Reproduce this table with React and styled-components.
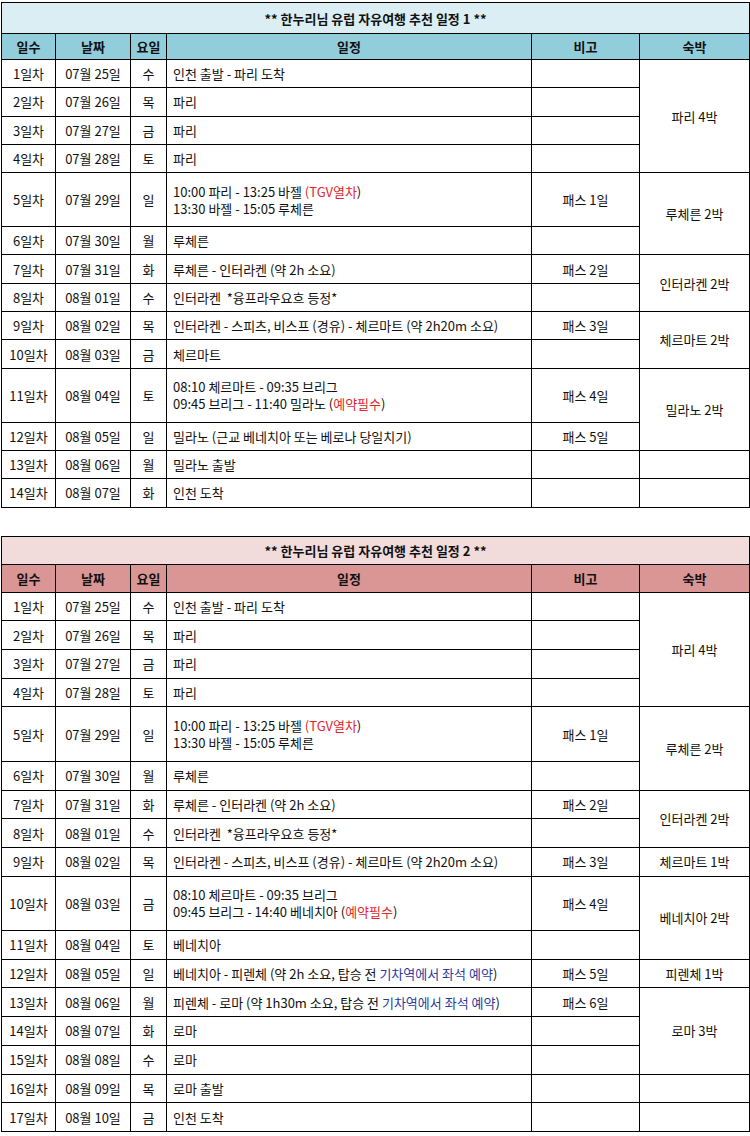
import React from "react";
import styled, { createGlobalStyle } from "styled-components";

const Global = createGlobalStyle`
  html, body { margin: 0; padding: 0; background: #fff; }
  body { font-family: "Noto Sans CJK KR", "Noto Sans", sans-serif; color: #111; }
`;

const Page = styled.div`
  display: flex;
  flex-direction: column;
  gap: 28px;
  padding: 2px 2px 0 1px;
`;

const Table = styled.table`
  width: 748px;
  border-collapse: collapse;
  table-layout: fixed;
  font-size: 13px;
  border: 1px solid #000;
`;

const TitleCell = styled.th`
  height: ${(p) => p.$h}px;
  padding: 0;
  background: ${(p) => p.$bg};
  border: 1px solid #000;
  font-weight: 700;
  text-align: center;
  vertical-align: middle;
`;

const HeadCell = styled.th`
  height: ${(p) => p.$h}px;
  padding: 0;
  background: ${(p) => p.$bg};
  border: 1px solid #000;
  font-weight: 700;
  text-align: center;
  vertical-align: middle;
`;

const Cell = styled.td`
  height: ${(p) => p.$h}px;
  padding: ${(p) => (p.$left ? "0 6px" : "0")};
  border: 1px solid #000;
  text-align: ${(p) => (p.$left ? "left" : "center")};
  vertical-align: middle;
  line-height: 17px;
  white-space: pre;
`;

const Red = styled.span`
  color: #e3262b;
`;

const Blue = styled.span`
  color: #2a3a9c;
`;

const COLS = [54, 75, 36, 365, 108, 110];
const HEADS = ["일수", "날짜", "요일", "일정", "비고", "숙박"];

const plan1 = [
  ["07월 25일", "수", "인천 출발 - 파리 도착"],
  ["07월 26일", "목", "파리"],
  ["07월 27일", "금", "파리"],
  ["07월 28일", "토", "파리"],
  ["07월 29일", "일", (
    <>
      10:00 파리 - 13:25 바젤 <Red>(TGV열차</Red>)
      <br />
      13:30 바젤 - 15:05 루체른
    </>
  ), true],
  ["07월 30일", "월", "루체른"],
  ["07월 31일", "화", "루체른 - 인터라켄 (약 2h 소요)"],
  ["08월 01일", "수", "인터라켄  *융프라우요흐 등정*"],
  ["08월 02일", "목", "인터라켄 - 스피츠, 비스프 (경유) - 체르마트 (약 2h20m 소요)"],
  ["08월 03일", "금", "체르마트"],
  ["08월 04일", "토", (
    <>
      08:10 체르마트 - 09:35 브리그
      <br />
      09:45 브리그 - 11:40 밀라노 (<Red>예약필수</Red>)
    </>
  ), true],
  ["08월 05일", "일", "밀라노 (근교 베네치아 또는 베로나 당일치기)"],
  ["08월 06일", "월", "밀라노 출발"],
  ["08월 07일", "화", "인천 도착"],
];

const notes1 = { 5: "패스 1일", 7: "패스 2일", 9: "패스 3일", 11: "패스 4일", 12: "패스 5일" };
const stays1 = [
  [1, 4, "파리 4박"],
  [5, 2, "루체른 2박"],
  [7, 2, "인터라켄 2박"],
  [9, 2, "체르마트 2박"],
  [11, 2, "밀라노 2박"],
  [13, 1, ""],
  [14, 1, ""],
];

const plan2 = [
  ["07월 25일", "수", "인천 출발 - 파리 도착"],
  ["07월 26일", "목", "파리"],
  ["07월 27일", "금", "파리"],
  ["07월 28일", "토", "파리"],
  ["07월 29일", "일", (
    <>
      10:00 파리 - 13:25 바젤 <Red>(TGV열차</Red>)
      <br />
      13:30 바젤 - 15:05 루체른
    </>
  ), true],
  ["07월 30일", "월", "루체른"],
  ["07월 31일", "화", "루체른 - 인터라켄 (약 2h 소요)"],
  ["08월 01일", "수", "인터라켄  *융프라우요흐 등정*"],
  ["08월 02일", "목", "인터라켄 - 스피츠, 비스프 (경유) - 체르마트 (약 2h20m 소요)"],
  ["08월 03일", "금", (
    <>
      08:10 체르마트 - 09:35 브리그
      <br />
      09:45 브리그 - 14:40 베네치아 (<Red>예약필수</Red>)
    </>
  ), true],
  ["08월 04일", "토", "베네치아"],
  ["08월 05일", "일", (
    <>
      베네치아 - 피렌체 (약 2h 소요, 탑승 전 <Blue>기차역에서 좌석 예약</Blue>)
    </>
  )],
  ["08월 06일", "월", (
    <>
      피렌체 - 로마 (약 1h30m 소요, 탑승 전 <Blue>기차역에서 좌석 예약</Blue>)
    </>
  )],
  ["08월 07일", "화", "로마"],
  ["08월 08일", "수", "로마"],
  ["08월 09일", "목", "로마 출발"],
  ["08월 10일", "금", "인천 도착"],
];

const notes2 = { 5: "패스 1일", 7: "패스 2일", 9: "패스 3일", 10: "패스 4일", 12: "패스 5일", 13: "패스 6일" };
const stays2 = [
  [1, 4, "파리 4박"],
  [5, 2, "루체른 2박"],
  [7, 2, "인터라켄 2박"],
  [9, 1, "체르마트 1박"],
  [10, 2, "베네치아 2박"],
  [12, 1, "피렌체 1박"],
  [13, 3, "로마 3박"],
  [16, 1, ""],
  [17, 1, ""],
];

function Schedule({ title, titleBg, headBg, plan, notes, stays, titleH, headH, rowH, dblH }) {
  return (
    <Table>
      <colgroup>
        {COLS.map((w, i) => (
          <col key={i} style={{ width: w }} />
        ))}
      </colgroup>
      <thead>
        <tr>
          <TitleCell colSpan={6} $bg={titleBg} $h={titleH}>
            {title}
          </TitleCell>
        </tr>
        <tr>
          {HEADS.map((h) => (
            <HeadCell key={h} $bg={headBg} $h={headH}>
              {h}
            </HeadCell>
          ))}
        </tr>
      </thead>
      <tbody>
        {plan.map(([date, dow, text, dbl], i) => {
          const day = i + 1;
          const h = dbl ? dblH : rowH;
          const stay = stays.find((s) => s[0] === day);
          return (
            <tr key={day}>
              <Cell $h={h}>{day}일차</Cell>
              <Cell $h={h}>{date}</Cell>
              <Cell $h={h}>{dow}</Cell>
              <Cell $h={h} $left>
                {text}
              </Cell>
              <Cell $h={h}>{notes[day] || ""}</Cell>
              {stay && <Cell rowSpan={stay[1]}>{stay[2]}</Cell>}
            </tr>
          );
        })}
      </tbody>
    </Table>
  );
}

export default function App() {
  return (
    <>
      <Global />
      <Page>
        <Schedule
          title="** 한누리님 유럽 자유여행 추천 일정 1 **"
          titleBg="#daeef3"
          headBg="#92cddc"
          plan={plan1}
          notes={notes1}
          stays={stays1}
          titleH={30}
          headH={25}
          rowH={27.3}
          dblH={53}
        />
        <Schedule
          title="** 한누리님 유럽 자유여행 추천 일정 2 **"
          titleBg="#f2dcdb"
          headBg="#da9694"
          plan={plan2}
          notes={notes2}
          stays={stays2}
          titleH={27}
          headH={27}
          rowH={27.7}
          dblH={53.5}
        />
      </Page>
    </>
  );
}
